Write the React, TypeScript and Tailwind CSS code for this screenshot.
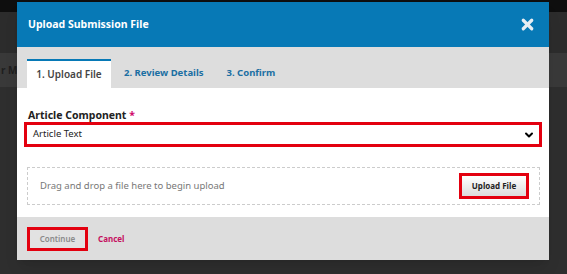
import React from 'react';
import { X, ChevronDown } from 'lucide-react';

const tabs = ['1. Upload File', '2. Review Details', '3. Confirm'];

export default function App() {
  return (
    <div className="relative w-[567px] h-[274px] overflow-hidden bg-[#2e2e2e] font-['Noto_Sans',sans-serif]">
      {/* dimmed page behind the modal */}
      <div className="h-[12px] bg-[#0e0e0e]" />
      <div className="h-[41px] bg-[#2c2c2c]" />
      <div className="h-[34px] bg-[#393939] flex items-center">
        <span className="text-[10px] font-bold text-[#1e1e1e] ml-[1px]">r Mo</span>
      </div>

      {/* modal */}
      <div className="absolute left-[17px] top-[2px] w-[532px] flex flex-col shadow-lg">
        <div className="h-[45px] bg-[#0779b6] flex items-center justify-between pl-[11px] pr-[13px]">
          <h2 className="text-[10.5px] font-bold text-white">Upload Submission File</h2>
          <X className="w-[17px] h-[17px] text-[#e8eef3]" strokeWidth={4.5} />
        </div>

        <div className="h-[41px] bg-[#dddddd] flex items-end pl-[10px] gap-[3px]">
          {tabs.map((t, i) =>
            i === 0 ? (
              <div
                key={t}
                className="h-[29px] w-[84px] bg-white border-t-2 border-[#0779b6] flex items-center justify-center text-[10px] font-semibold text-[#444]"
              >
                {t}
              </div>
            ) : (
              <div key={t} className="h-[29px] px-[10px] flex items-center text-[9.5px] font-bold text-[#1b6fa3]">
                {t}
              </div>
            )
          )}
        </div>

        <div className="h-[129px] bg-white px-[10px] pt-[20px] flex flex-col">
          <label className="text-[10.5px] font-bold text-[#222] leading-[14px] pl-[1px]">
            Article Component <span className="text-[#d00a6c]">*</span>
          </label>
          <div className="-mx-[3px] h-[25px] border-[3px] border-[#e3000f] flex items-center justify-between pl-[6px] pr-[4px]">
            <span className="text-[9.5px] text-[#222]">Article Text</span>
            <ChevronDown className="w-[12px] h-[12px] text-black" strokeWidth={4} />
          </div>
          <div className="mt-[20px] h-[38px] mr-[-1px] border border-dashed border-[#cccccc] flex items-center justify-between pl-[12px] pr-[10px]">
            <span className="text-[9.5px] text-[#777]">Drag and drop a file here to begin upload</span>
            <div className="w-[70px] h-[26px] border-[3px] border-[#e3000f] bg-gradient-to-b from-white to-[#dcdcdc] flex items-center justify-center text-[8px] font-bold text-[#222]">
              Upload File
            </div>
          </div>
        </div>

        <div className="h-[43px] bg-[#dddddd] flex items-center pl-[10px] gap-[10px]">
          <div className="w-[61px] h-[24px] border-[3px] border-[#e3000f] bg-[#e2e2e2] flex items-center justify-center text-[8px] font-semibold text-[#8a8a8a]">
            Continue
          </div>
          <span className="text-[8px] font-bold text-[#c5105f]">Cancel</span>
        </div>
      </div>
    </div>
  );
}
